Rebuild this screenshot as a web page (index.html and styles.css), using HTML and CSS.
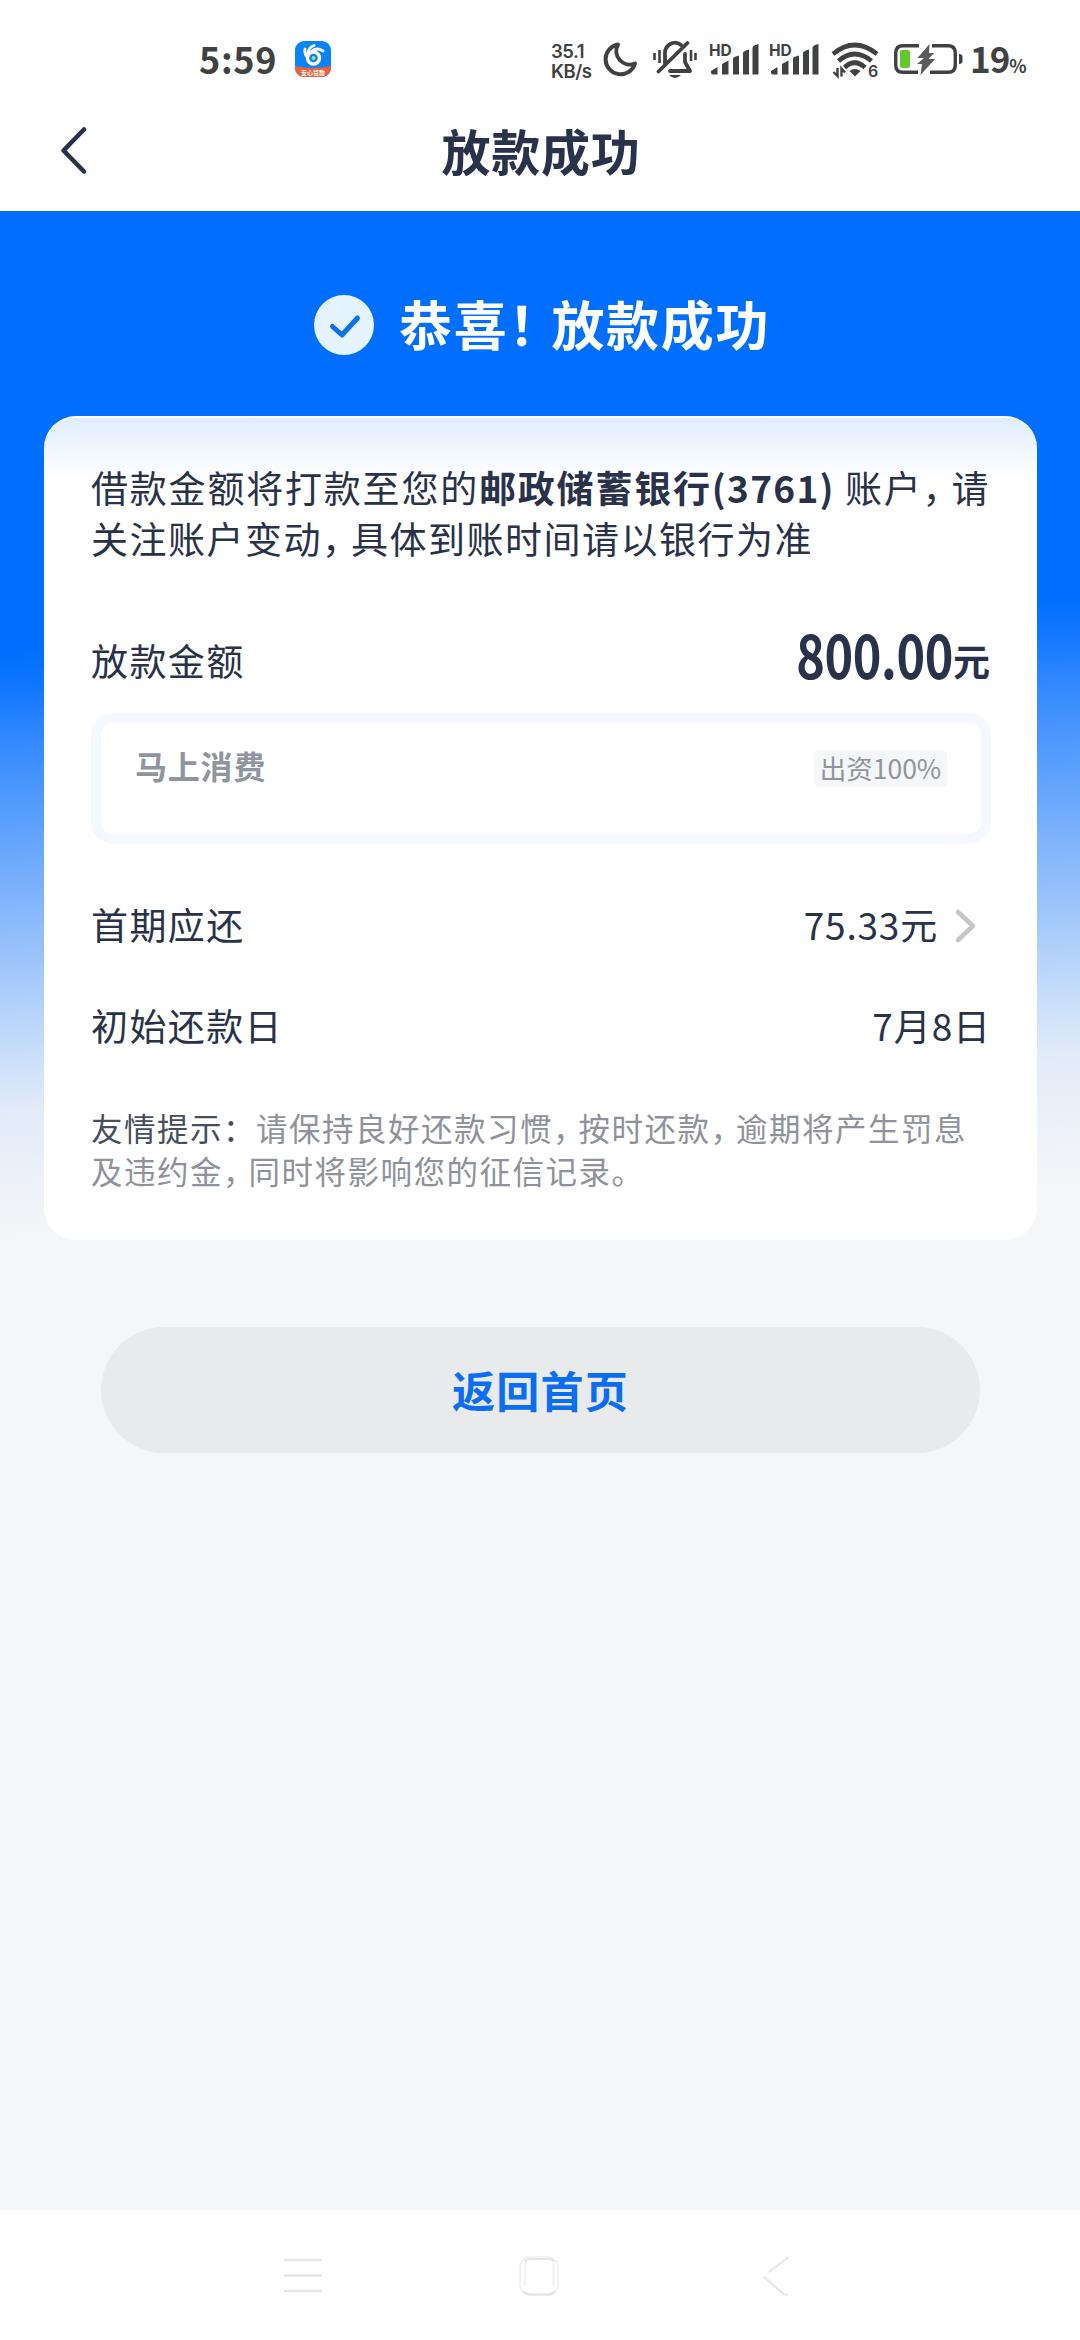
FILE: index.html
```html
<!DOCTYPE html>
<html lang="zh-CN">
<head>
<meta charset="utf-8">
<title>放款成功</title>
<link rel="stylesheet" href="styles.css">
</head>
<body>
<div class="status">
  <div class="status-left">
    <span class="clock">5:59</span>
    <svg class="app" width="36" height="36" viewBox="0 0 36 36">
      <defs><clipPath id="r"><rect width="36" height="36" rx="9"/></clipPath></defs>
      <g clip-path="url(#r)">
        <rect width="36" height="36" fill="#0a84f5"/>
        <path d="M0 25Q18 29 36 25V36H0Z" fill="#e9603a"/>
        <circle cx="18.500" cy="17" r="6" fill="none" stroke="#fff" stroke-width="3.400"/>
        <path d="M12 16Q9 12 10 8M13 12Q14 6 19 4.500M17 10Q22 6 28 10" fill="none" stroke="#fff" stroke-width="2.800" stroke-linecap="round"/>
        <circle cx="18.500" cy="17" r="2" fill="#a5d8a0"/>
      </g>
      <text class="app-label" x="18" y="33.500" text-anchor="middle">安心贷款</text>
    </svg>
  </div>
  <div class="status-right">
    <div class="rate"><span>35.1</span><span>KB/s</span></div>
    <svg class="moon" width="36" height="38" viewBox="602 41 36 38"><path d="M618 44.500A15 15 0 1 0 635 63.500A13.500 13.500 0 0 1 618 44.500Z" fill="none" stroke="#404142" stroke-width="4" stroke-linejoin="round"/></svg>
    <svg class="bell" width="46" height="40" viewBox="652 40 46 40" fill="none" stroke="#404142" stroke-linecap="round">
      <path d="M665 64V55A10 11 0 0 1 681 45" stroke-width="3.800"/>
      <path d="M685 54V62L690 71H670" stroke-width="3.800" stroke-linejoin="round"/>
      <path d="M658.500 71.500L687.500 43" stroke-width="3.800"/>
      <path d="M654.500 53V60M659.500 50V63M691 50V61M695.500 53V60" stroke-width="2.600" stroke-linecap="butt"/>
      <path d="M669 75H681Q675 81 669 75Z" fill="#404142" stroke="none"/>
    </svg>
    <svg class="sig" width="50" height="48" viewBox="709 33 50 48"><g fill="#404142"><path d="M711 71L717.500 67V74.500H713Q711 74.500 711 72.500ZM722 64L728.500 60.500V74.500H722ZM733 58.500Q733 57 739 55.500V74.500H733ZM743 53Q743 51 749 49.500V74.500H743ZM752.500 48Q752.500 45 758.500 44V74.500H752.500Z"/></g><text class="hd" x="709" y="55.500">HD</text></svg>
    <svg class="sig" width="50" height="48" viewBox="709 33 50 48"><g fill="#404142"><path d="M711 71L717.500 67V74.500H713Q711 74.500 711 72.500ZM722 64L728.500 60.500V74.500H722ZM733 58.500Q733 57 739 55.500V74.500H733ZM743 53Q743 51 749 49.500V74.500H743ZM752.500 48Q752.500 45 758.500 44V74.500H752.500Z"/></g><text class="hd" x="709" y="55.500">HD</text></svg>
    <svg class="wifi" width="48" height="48" viewBox="831 37 48 48" fill="none" stroke="#404142" stroke-width="4.600">
      <path d="M833 54Q854.500 36 877 54M838.500 61Q854.500 47 871.500 61M844.500 67.500Q854.500 58 865 67.500"/>
      <path d="M849.500 71Q855 67 860.500 71L855 76.500Z" fill="#404142" stroke="none"/>
      <path d="M837.500 68V76L833.500 72M841.500 76.500V68.500L845 72.500" stroke-width="2.400"/>
      <text class="wifi-six" x="868" y="76.500">6</text>
    </svg>
    <svg class="battery" width="70" height="36" viewBox="892 41 70 36">
      <path d="M918 45.700H902Q894.700 45.700 894.700 53V65Q894.700 72.300 902 72.300H917M931 45.700H947Q954.300 45.700 954.300 53V65Q954.300 72.300 947 72.300H929" fill="none" stroke="#404142" stroke-width="3.400"/>
      <rect x="899" y="50" width="10" height="18" rx="2" fill="#62c82b"/>
      <path d="M928.500 44L916.500 58H923L916 64H921L919.500 75L934 59H927.500L933 53H928Z" fill="#5a5b5c"/>
      <path d="M958 54Q961.500 54 961.500 57V61Q961.500 64 958 64Z" fill="#404142"/>
    </svg>
    <span class="pct">19<small>%</small></span>
  </div>
</div>
<header class="nav">
  <svg class="back" width="30" height="52" viewBox="58 124 30 52"><path d="M84 129.500L63.500 150.500L84 171.500" fill="none" stroke="#29324a" stroke-width="4.600" stroke-linecap="round" stroke-linejoin="round"/></svg>
  <h1>放款成功</h1>
</header>
<main>
  <div class="hero">
    <svg width="60" height="60" viewBox="0 0 60 60"><circle cx="30" cy="30" r="30" fill="#e5f4ff"/><path d="M18.500 31.500L28 40L43.500 23" fill="none" stroke="#0f71ea" stroke-width="5" stroke-linecap="round" stroke-linejoin="round"/></svg>
    <h2>恭喜<span class="bang">！</span>放款成功</h2>
  </div>
  <section class="card">
    <p class="notice"><span class="first">借款金额将打款至您的<b>邮政储蓄银行<span class="acct">(3761)</span></b> 账户<span class="comma">，</span>请</span><br>关注账户变动<span class="comma">，</span>具体到账时间请以银行为准</p>
    <div class="row amount"><span>放款金额</span><span class="sum"><span class="num">800.00</span><span class="unit">元</span></span></div>
    <div class="funder"><span class="name">马上消费</span><span class="tag">出资100%</span></div>
    <div class="row first-due"><span>首期应还</span><span class="link">75.33元<svg width="24" height="36" viewBox="0 0 24 36"><path d="M4 4L19 18L4 32" fill="none" stroke="#c5c6c9" stroke-width="4.600" stroke-linecap="round" stroke-linejoin="round"/></svg></span></div>
    <div class="row due-day"><span>初始还款日</span><span class="date">7月8日</span></div>
    <p class="tips"><span class="label">友情提示：</span>请保持良好还款习惯<span class="comma">，</span>按时还款<span class="comma">，</span>逾期将产生罚息<br>及违约金<span class="comma">，</span>同时将影响您的征信记录。</p>
  </section>
  <button class="home">返回首页</button>
</main>
<footer class="keys">
  <svg width="40" height="40" viewBox="0 0 40 40"><path d="M1 5H39M1 20.500H39M1 36H39" stroke="#e6e6e6" stroke-width="2.400"/></svg>
  <svg width="42" height="42" viewBox="0 0 42 42" fill="none"><rect x="2" y="2" width="38" height="38" rx="10" stroke="#f1f1f1" stroke-width="1.600"/><path d="M7 7Q8 4 12 4H31Q35 4 36 7M5 36Q8 39.500 13 39.500H29Q34 39.500 37 36" stroke="#e4e4e4" stroke-width="2"/><path d="M7 8V31M35.500 8V31" stroke="#f0f0f0" stroke-width="1.500"/></svg>
  <svg width="28" height="42" viewBox="0 0 28 42"><path d="M26.500 2L7 17M1.500 21.500L22 39.500L26 40" fill="none" stroke="#e6e6e6" stroke-width="2.200"/></svg>
</footer>
</body>
</html>
```
FILE: styles.css
```css
* { box-sizing: border-box; }
body {
  margin: 0;
  width: 1080px;
  height: 2340px;
  display: flex;
  flex-direction: column;
  overflow: hidden;
  background: #f5f6f8;
  color: #29324a;
  font-family: "Noto Sans CJK SC", sans-serif;
}
svg { display: block; flex: none; }
h1, h2, p { margin: 0; }

.status {
  height: 100px;
  flex: none;
  display: flex;
  justify-content: space-between;
  background: #fff;
  color: #404142;
}
.status-left, .status-right { display: flex; align-items: flex-start; }
.status-left { padding-left: 199px; }
.clock { width: 96px; padding-top: 38px; font-size: 36px; line-height: 40px; font-weight: 700; letter-spacing: .700px; }
.app { margin-top: 41px; }
.app-label { font-size: 6px; font-weight: 700; fill: #fff; }
.status-right { width: 529px; }
.rate { width: 51px; padding-top: 41px; display: flex; flex-direction: column; font: 600 18.500px/20px Inter, sans-serif; letter-spacing: -.500px; }
.moon { margin-top: 41px; }
.bell { margin: 40px 0 0 14px; }
.sig { margin: 33px 0 0 11px; }
.sig + .sig { margin-left: 10px; }
.hd { font: 700 15.500px Inter, sans-serif; fill: #404142; }
.wifi { margin: 37px 0 0 12px; }
.wifi-six { font: 600 16px Inter, sans-serif; fill: #404142; stroke: none; }
.battery { margin: 41px 0 0 14px; }
.pct { margin-left: 7px; padding-top: 38px; font-size: 35px; line-height: 40px; font-weight: 700; letter-spacing: -1px; white-space: nowrap; }
.pct small { font-size: 18px; }

.nav {
  height: 111px;
  flex: none;
  display: grid;
  grid-template-columns: 88px 1fr 88px;
  background: #fff;
}
.back { margin: 24px 0 0 58px; }
.nav h1 { padding: 15px 0 0 2px; text-align: center; font-size: 49px; line-height: 70px; font-weight: 700; letter-spacing: .700px; }

main {
  flex: 1;
  display: flex;
  flex-direction: column;
  align-items: center;
  background: linear-gradient(177deg, #006eff 0, #006eff 40.500%, #1478ff 44.300%, #348afe 49%, #7db2fc 62.700%, #cfe2fa 79%, #e3ebf9 83%, #f5f6f8 95%) 0 0 / 1080px 1030px no-repeat;
}
.hero { height: 205px; padding-top: 84px; display: flex; align-self: flex-start; margin-left: 314px; color: #fff; }
.hero h2 { margin: -7px 0 0 25px; font-size: 53px; line-height: 70px; font-weight: 700; letter-spacing: 1.700px; white-space: nowrap; }
.bang { letter-spacing: -10px; }

.card {
  width: 993px;
  height: 824px;
  margin-left: 1px;
  padding: 44px 46px 0 47px;
  border-radius: 32px;
  border-top: 2px solid #fff;
  background: linear-gradient(#e0edff, #fff 60px);
  white-space: nowrap;
}
.notice { font-size: 37px; line-height: 51px; letter-spacing: 1.500px; }
.first { letter-spacing: 1.800px; }
.acct { letter-spacing: 1.300px; }
.comma { letter-spacing: -8px; }
.row { display: flex; justify-content: space-between; align-items: center; height: 60px; font-size: 37px; line-height: 60px; letter-spacing: 1.400px; }
.amount { margin-top: 66px; }
.sum { display: flex; align-items: center; font-weight: 700; letter-spacing: 0; }
.num { width: 159px; padding-bottom: 14px; font-size: 60px; font-weight: 700; letter-spacing: -.500px; transform: scaleX(.810); transform-origin: right; display: flex; justify-content: flex-end; }
.unit { width: 38px; font-size: 37px; }
.funder {
  height: 131px;
  margin-top: 23px;
  padding: 25px 34px 0 34px;
  display: flex;
  justify-content: space-between;
  align-items: flex-start;
  border: 10px solid #f5f8ff;
  border-radius: 22px;
}
.name { font-size: 32px; line-height: 34px; font-weight: 700; letter-spacing: .800px; color: #8f949e; }
.tag { width: 133px; height: 37px; margin-top: 2px; text-align: center; border-radius: 5px; background: #f5f6f8; color: #919499; font-size: 26.500px; line-height: 36px; }
.first-due { margin-top: 50px; }
.link { display: flex; align-items: center; letter-spacing: .800px; }
.link svg { margin: 4px 13px 0 16px; }
.due-day { margin-top: 41px; }
.date { letter-spacing: .900px; }
.tips { margin-top: 51px; font-size: 31.500px; line-height: 43px; letter-spacing: 1.500px; color: #8f929a; }
.tips .comma { letter-spacing: -6px; }
.label { color: #454d5e; }

.home {
  width: 879px;
  height: 126px;
  margin: 87px 0 0 1px;
  padding: 0 0 2px;
  border: 0;
  border-radius: 63px;
  background: #e8eaec;
  color: #0a6df2;
  font: 700 43px/60px "Noto Sans CJK SC", sans-serif;
  letter-spacing: 1.200px;
}

.keys {
  height: 130px;
  flex: none;
  display: flex;
  align-items: flex-start;
  padding: 45px 0 0 283px;
  background: #fefefe;
}
.keys svg + svg { margin-left: 195px; }
.keys svg:last-child { margin-left: 202px; }
```
